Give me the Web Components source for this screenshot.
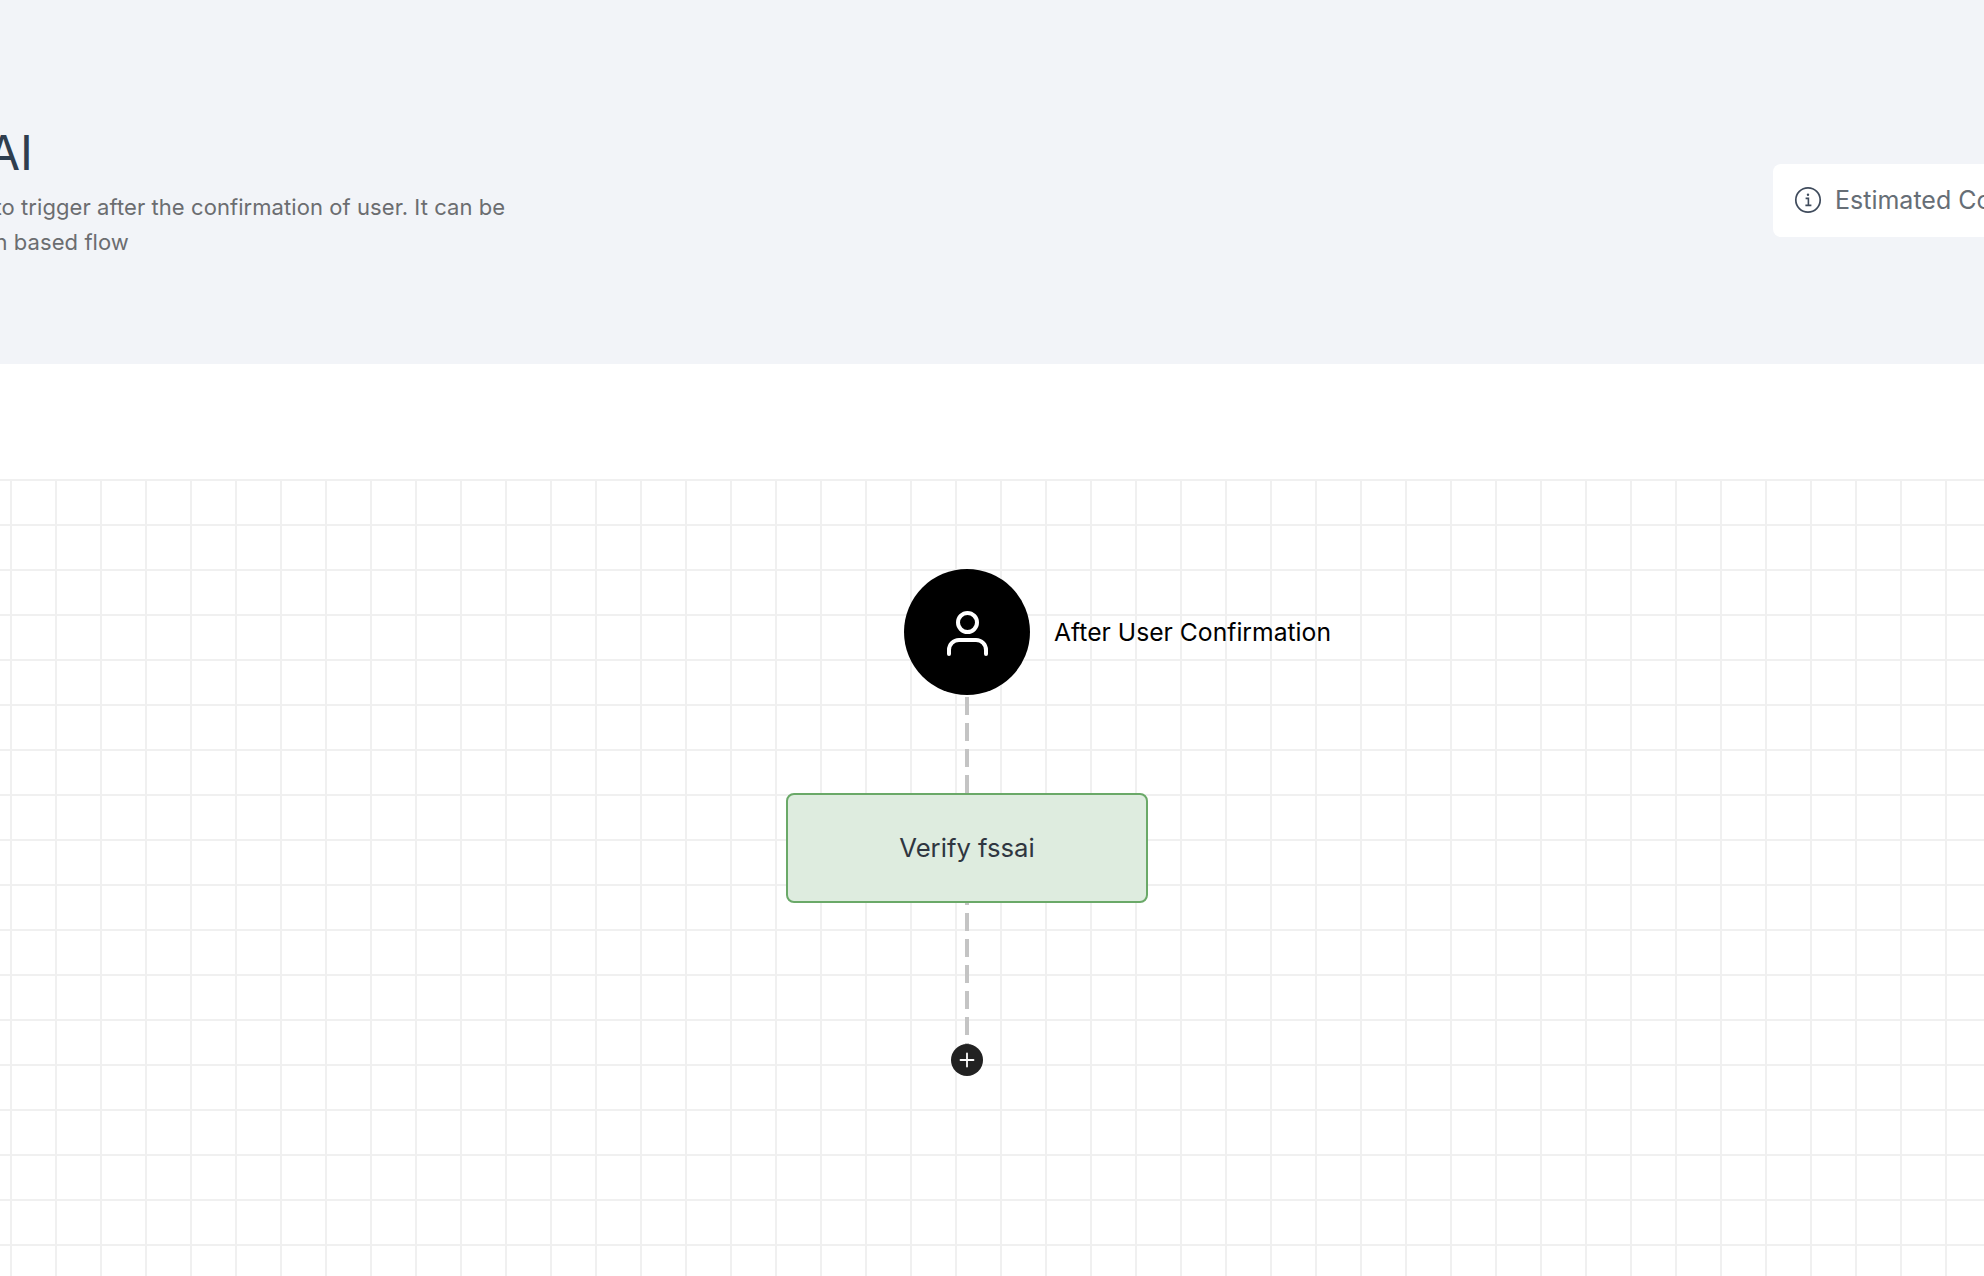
<!DOCTYPE html>
<html lang="en">
<head>
<meta charset="utf-8">
<title>Flow</title>
<style>
  html, body { margin: 0; padding: 0; background: #fff; }
  body { width: 1984px; height: 1276px; overflow: hidden; font-family: Inter, "Liberation Sans", sans-serif; }
</style>
</head>
<body>
<flow-page>
  <page-header>
    <span slot="title">AI</span>
    <span slot="line">to trigger after the confirmation of user. It can be</span>
    <span slot="line2">n based flow</span>
    <info-chip slot="chip">Estimated Cost</info-chip>
  </page-header>
  <flow-canvas>
    <trigger-node>After User Confirmation</trigger-node>
    <flow-connector height="98" offset="2"></flow-connector>
    <action-node>Verify fssai</action-node>
    <flow-connector height="142" offset="-16"></flow-connector>
    <add-button></add-button>
  </flow-canvas>
</flow-page>

<script>
class FlowPage extends HTMLElement {
  constructor() {
    super();
    this.attachShadow({ mode: "open" });
    this.shadowRoot.innerHTML = `
      <style>
        :host { display: flex; flex-direction: column; width: 1984px; height: 1276px; overflow: hidden; background: #fff; }
      </style>
      <slot></slot>
    `;
  }
}

class PageHeader extends HTMLElement {
  constructor() {
    super();
    this.attachShadow({ mode: "open" });
    this.shadowRoot.innerHTML = `
      <style>
        :host {
          display: flex;
          justify-content: space-between;
          align-items: flex-start;
          height: 364px;
          box-sizing: border-box;
          padding-top: 124px;
          background: #f2f4f8;
          overflow: hidden;
        }
        .intro { margin-left: -5.5px; }
        .title {
          font-size: 48px;
          line-height: 58px;
          font-weight: 400;
          color: #2f3e4e;
          margin-left: -7.5px;
          white-space: nowrap;
        }
        .desc {
          margin-top: 8px;
          font-size: 22px;
          line-height: 35px;
          letter-spacing: 0.07px;
          color: #6b6d70;
          white-space: nowrap;
        }
        .desc div { display: block; }
        .chip { margin-top: 40px; width: 211px; flex: none; }
      </style>
      <div class="intro">
        <div class="title"><slot name="title"></slot></div>
        <div class="desc">
          <div><slot name="line"></slot></div>
          <div><slot name="line2"></slot></div>
        </div>
      </div>
      <div class="chip"><slot name="chip"></slot></div>
    `;
  }
}

class InfoChip extends HTMLElement {
  constructor() {
    super();
    this.attachShadow({ mode: "open" });
    this.shadowRoot.innerHTML = `
      <style>
        :host {
          display: flex;
          align-items: center;
          gap: 13px;
          width: 320px;
          height: 73px;
          box-sizing: border-box;
          padding-left: 21px;
          background: #fff;
          border-radius: 8px;
          font-size: 25px;
          color: #666e76;
          white-space: nowrap;
        }
        svg { flex: none; display: block; margin-top: -2px; }
        .text { margin-top: -2px; }
      </style>
      <svg width="28" height="28" viewBox="0 0 28 28" fill="none" stroke="#3f4b5c" stroke-width="1.7">
        <circle cx="14" cy="14" r="12.2"/>
        <path d="M11.6 12.4h2.8v6.8M11.4 19.4h6" stroke-width="1.6"/>
        <circle cx="14" cy="8.8" r="1.2" fill="#3f4b5c" stroke="none"/>
      </svg>
      <span class="text"><slot></slot></span>
    `;
  }
}

class FlowCanvas extends HTMLElement {
  constructor() {
    super();
    this.attachShadow({ mode: "open" });
    this.shadowRoot.innerHTML = `
      <style>
        :host {
          display: flex;
          flex-direction: column;
          align-items: center;
          margin-top: 115px;
          height: 797px;
          box-sizing: border-box;
          padding: 90px 50px 0 0;
          background-color: #fff;
          background-image:
            linear-gradient(to right, #f0f0f0 2px, transparent 2px),
            linear-gradient(to bottom, #f0f0f0 2px, transparent 2px);
          background-size: 45px 45px;
          background-position: 10px 0;
        }
      </style>
      <slot></slot>
    `;
  }
}

class TriggerNode extends HTMLElement {
  constructor() {
    super();
    this.attachShadow({ mode: "open" });
    this.shadowRoot.innerHTML = `
      <style>
        :host { display: block; position: relative; width: 126px; height: 126px; }
        .circle { width: 126px; height: 126px; border-radius: 50%; background: #000; }
        svg { display: block; }
        .label {
          position: absolute;
          left: 150px;
          top: 0;
          height: 126px;
          display: flex;
          align-items: center;
          font-size: 24.7px;
          color: #000;
          white-space: nowrap;
        }
      </style>
      <div class="circle">
        <svg width="126" height="126" viewBox="0 0 126 126" fill="none" stroke="#fff" stroke-width="4" stroke-linecap="round">
          <circle cx="63.5" cy="53.5" r="9.5"/>
          <path d="M45 85v-4a10 10 0 0 1 10-10h17a10 10 0 0 1 10 10v4"/>
        </svg>
      </div>
      <div class="label"><slot></slot></div>
    `;
  }
}

class ActionNode extends HTMLElement {
  constructor() {
    super();
    this.attachShadow({ mode: "open" });
    this.shadowRoot.innerHTML = `
      <style>
        :host {
          display: flex;
          align-items: center;
          justify-content: center;
          flex: none;
          width: 362px;
          height: 110px;
          box-sizing: border-box;
          padding-bottom: 2px;
          background: #deecdf;
          border: 2px solid #6aa968;
          border-radius: 8px;
          font-size: 25.7px;
          color: #2f3640;
        }
      </style>
      <slot></slot>
    `;
  }
}

class FlowConnector extends HTMLElement {
  constructor() {
    super();
    this.attachShadow({ mode: "open" });
    const offset = this.getAttribute("offset") || "0";
    this.shadowRoot.innerHTML = `
      <style>
        :host {
          display: block;
          flex: none;
          width: 4px;
          height: ${this.getAttribute("height") || 98}px;
          background-image: linear-gradient(to bottom, #c4c4c4 18px, transparent 18px);
          background-size: 4px 26px;
          background-position: 0 ${offset}px;
        }
      </style>
    `;
  }
}

class AddButton extends HTMLElement {
  constructor() {
    super();
    this.attachShadow({ mode: "open" });
    this.shadowRoot.innerHTML = `
      <style>
        :host {
          display: flex;
          align-items: center;
          justify-content: center;
          flex: none;
          width: 32px;
          height: 32px;
          margin-top: -1px;
          border-radius: 50%;
          background: #222;
        }
        svg { display: block; }
      </style>
      <svg width="16" height="16" viewBox="0 0 16 16" fill="none" stroke="#fff" stroke-width="1.8" stroke-linecap="round">
        <path d="M8 1.5v13M1.5 8h13"/>
      </svg>
    `;
  }
}

customElements.define("flow-page", FlowPage);
customElements.define("page-header", PageHeader);
customElements.define("info-chip", InfoChip);
customElements.define("flow-canvas", FlowCanvas);
customElements.define("trigger-node", TriggerNode);
customElements.define("action-node", ActionNode);
customElements.define("flow-connector", FlowConnector);
customElements.define("add-button", AddButton);
</script>
</body>
</html>
